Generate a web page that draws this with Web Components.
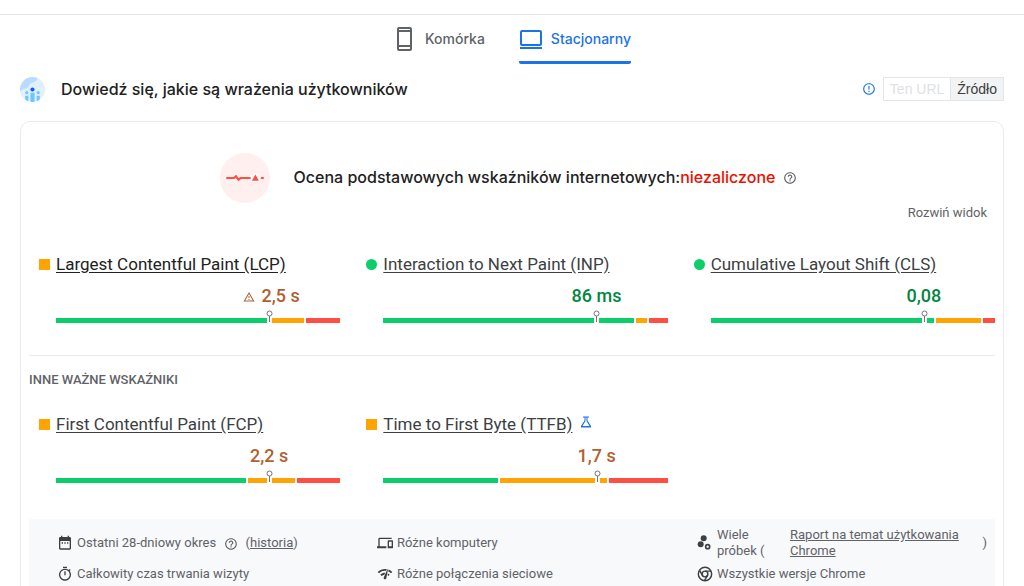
<!DOCTYPE html>
<html lang="pl">
<head>
<meta charset="utf-8">
<meta name="viewport" content="width=device-width, initial-scale=1">
<title>PageSpeed Insights</title>
<style>
html { scrollbar-width: none; }
body { margin: 0; background: #fff; color: #3c4043; font: 13px/16px Roboto, sans-serif; --display: "Inter", sans-serif; }
a { color: inherit; }
</style>
</head>
<body>
<psi-page>
  <psi-tabs slot="tabs">
    <psi-tab icon="phone">Komórka</psi-tab>
    <psi-tab icon="laptop" active>Stacjonarny</psi-tab>
  </psi-tabs>
  <section-header>Dowiedź się, jakie są wrażenia użytkowników
    <source-switch slot="end"></source-switch>
  </section-header>
  <vitals-card>
    <vitals-summary slot="summary" result="niezaliczone">Ocena podstawowych wskaźników internetowych:</vitals-summary>
    <metric-card slot="core" rating="average" value="2,5 s" warn strong bar="good:210 pin average:32 poor:34">Largest Contentful Paint (LCP)</metric-card>
    <metric-card slot="core" rating="good" value="86 ms" bar="good:210 pin good:34 average:11 poor:19">Interaction to Next Paint (INP)</metric-card>
    <metric-card slot="core" rating="good" value="0,08" bar="good:210 pin good:6 average:45 poor:12">Cumulative Layout Shift (CLS)</metric-card>
    <metric-card slot="other" rating="average" value="2,2 s" bar="good:188 average:19 pin average:23 poor:43">First Contentful Paint (FCP)</metric-card>
    <metric-card slot="other" rating="average" value="1,7 s" flask bar="good:113 average:94 pin average:7 poor:58">Time to First Byte (TTFB)</metric-card>
    <info-item slot="info" icon="calendar">Ostatni 28-dniowy okres <ui-icon name="help" style="--size:14px;margin:0 4px 0 5px"></ui-icon> (<a href="#historia">historia</a>)</info-item>
    <info-item slot="info" icon="devices">Różne komputery</info-item>
    <info-item slot="info" icon="samples" split>Wiele próbek (<a slot="link" href="#crux">Raport na temat użytkowania Chrome</a><span slot="close">)</span></info-item>
    <info-item slot="info" icon="timer">Całkowity czas trwania wizyty</info-item>
    <info-item slot="info" icon="network">Różne połączenia sieciowe</info-item>
    <info-item slot="info" icon="chrome">Wszystkie wersje Chrome</info-item>
  </vitals-card>
</psi-page>

<script>
const define = (name, html, setup) => {
  const template = document.createElement('template');
  template.innerHTML = html;
  customElements.define(name, class extends HTMLElement {
    constructor() {
      super();
      this.attachShadow({ mode: 'open' }).append(template.content.cloneNode(true));
    }
    connectedCallback() { if (setup) setup(this, this.shadowRoot); }
  });
};

const ICONS = {
  phone: '<path fill-rule="evenodd" d="M6 0h11q2 0 2 2v20q0 2-2 2H6q-2 0-2-2V2q0-2 2-2zm0 5v13h11V5zM6 2v1h11V2zM6 20v2h11v-2z"/>',
  laptop: '<rect x="2" y="4" width="20" height="14" rx="1" fill="none" stroke="currentColor" stroke-width="2"/><path d="M1 20h22v2H1z"/>',
  help: '<path d="M11 18h2v-2h-2v2zm1-16C6.48 2 2 6.48 2 12s4.48 10 10 10 10-4.48 10-10S17.52 2 12 2zm0 18c-4.41 0-8-3.59-8-8s3.59-8 8-8 8 3.59 8 8-3.59 8-8 8zm0-14c-2.21 0-4 1.79-4 4h2c0-1.1.9-2 2-2s2 .9 2 2c0 2-3 1.75-3 5h2c0-2.25 3-2.5 3-5 0-2.21-1.79-4-4-4z"/>',
  info: '<path d="M11 15h2v2h-2zm0-8h2v6h-2zm1-5C6.47 2 2 6.48 2 12s4.47 10 10 10 10-4.48 10-10S17.52 2 12 2zm0 18c-4.42 0-8-3.58-8-8s3.58-8 8-8 8 3.58 8 8-3.58 8-8 8z"/>',
  warning: '<path d="M12 6l7.53 13H4.47L12 6m0-4L1 21h22L12 2zm1 14h-2v2h2v-2zm0-6h-2v4h2v-4z"/>',
  flask: '<path d="M6 1h12v2h-3v6l7 11v3H2v-3L9 9V3H6zm5 2v7L5 20h14l-6-10V3z" fill-rule="evenodd"/>',
  calendar: '<path d="M19 3h-1V1h-2v2H8V1H6v2H5c-1.1 0-2 .9-2 2v15c0 1.1.9 2 2 2h14c1.1 0 2-.9 2-2V5c0-1.1-.9-2-2-2zm0 17H5V9h14v11zM7 11h2v2H7zm4 0h2v2h-2zm4 0h2v2h-2z"/>',
  timer: '<path d="M15 1H9v2h6V1zm-4 13h2V8h-2v6zm8.03-6.61l1.42-1.42c-.43-.51-.9-.99-1.41-1.41l-1.42 1.42C16.07 4.74 14.12 4 12 4c-4.97 0-9 4.03-9 9s4.02 9 9 9 9-4.03 9-9c0-2.12-.74-4.07-1.97-5.61zM12 20c-3.87 0-7-3.13-7-7s3.13-7 7-7 7 3.13 7 7-3.13 7-7 7z"/>',
  devices: '<path d="M4 6h18V4H4c-1.1 0-2 .9-2 2v11H0v3h14v-3H4V6zm19 2h-6c-.55 0-1 .45-1 1v10c0 .55.45 1 1 1h6c.55 0 1-.45 1-1V9c0-.55-.45-1-1-1zm-1 9h-4v-7h4v7z"/>',
  network: '<path d="M15.9 5c-.17 0-.32.09-.41.23l-.07.15-5.18 11.65c-.16.29-.26.61-.26.96 0 1.11.9 2.01 2.01 2.01.96 0 1.77-.68 1.96-1.59l.01-.03L16.4 5.5c0-.28-.22-.5-.5-.5zM1 9l2 2c2.88-2.88 6.79-4.08 10.53-3.62l1.19-2.68C9.89 3.84 4.74 5.27 1 9zm20 2l2-2c-1.64-1.64-3.55-2.82-5.59-3.57l-.53 2.82c1.5.62 2.9 1.53 4.12 2.75zm-4 4l2-2c-.8-.8-1.7-1.42-2.66-1.89l-.55 2.92c.42.27.83.59 1.21.97zM5 13l2 2c1.13-1.13 2.56-1.79 4.03-2l1.28-2.88c-2.63-.08-5.3.87-7.31 2.88z"/>',
  samples: '<circle cx="10" cy="5" r="4.5"/><circle cx="5.5" cy="14" r="4.5"/><circle cx="16" cy="17.5" r="3" fill="none" stroke="currentColor" stroke-width="2.5"/>',
  chrome: '<g fill="none" stroke="currentColor" stroke-width="2.2"><circle cx="12" cy="12" r="10"/><circle cx="12" cy="12" r="4.3"/><path d="M12 7.7h9M8.3 14.2L3.8 6.4M15.7 14.2l-4.5 7.8"/></g>',
  people: '<defs><clipPath id="disc"><circle cx="12" cy="12" r="12"/></clipPath></defs><g clip-path="url(#disc)"><path fill="#e1f0ff" d="M0 0h24v24H0z"/><path fill="#b8dbff" d="M0 0h17q0 4-4 5-3 0-4 3-1 3-4 3-2 0-5 3z"/><g fill="#6cc7ff"><path d="M5 18h3v6H5zM10 15h4v9h-4zM16 18h3v6h-3z"/><circle cx="6.5" cy="15" r="1.5"/><circle cx="17.5" cy="15" r="1.5"/></g><circle cx="12" cy="12" r="2" fill="#0d5bff"/></g>',
  pulse: '<circle cx="12" cy="12" r="12" fill="#ffefee"/><path d="M3 12h3.7l1-.8 1.2 1.6 1-.8h4.8M19.6 12H21" fill="none" stroke="#ff4e42"/><circle cx="17" cy="12" r="2.2" fill="#fff"/><path d="M17 10.3l1.7 3h-3.4z" fill="#ff4e42"/>'
};
define('ui-icon', `<style>
:host { display: inline-flex; flex: none; width: var(--size, 16px); height: var(--size, 16px); vertical-align: middle; }
svg { width: 100%; height: 100%; fill: currentColor; }
</style><svg viewBox="0 0 24 24" aria-hidden="true"></svg>`,
  (host, root) => { root.querySelector('svg').innerHTML = ICONS[host.getAttribute('name')] || ''; });

const setIcon = (icon, name) => {
  icon.setAttribute('name', name);
  icon.connectedCallback();
};

define('psi-page', `<style>
:host { display: block; padding-top: 14px; }
main { padding: 0 20px 20px; }
</style><slot name="tabs"></slot><main><slot></slot></main>`);

define('psi-tabs', `<style>
:host { display: block; border-top: 1px solid #e3e5ea; }
nav { display: flex; justify-content: center; gap: 34px; height: 49px; }
</style><nav role="tablist"><slot></slot></nav>`);

define('psi-tab', `<style>
:host { display: flex; --color: #5f6368; }
:host([active]) { --color: #1a73e8; }
button { all: unset; box-sizing: border-box; display: flex; align-items: center; gap: 8px; height: 49px; padding-top: 2px; color: var(--color); font: 500 14px/20px var(--display); cursor: pointer; border-bottom: 3px solid transparent; }
:host([active]) button { border-color: var(--color); border-radius: 2px; }
ui-icon { --size: 24px; }
</style><button role="tab"><ui-icon></ui-icon><slot></slot></button>`,
  (host, root) => {
    setIcon(root.querySelector('ui-icon'), host.getAttribute('icon'));
    root.querySelector('button').setAttribute('aria-selected', host.hasAttribute('active'));
  });

define('section-header', `<style>
:host { display: flex; align-items: center; height: 24px; margin: 13px 0 20px; color: #212121; }
ui-icon { --size: 25px; margin-right: 16px; }
h2 { flex: 1; margin: 0; font: 500 16px/24px var(--display); }
</style><ui-icon name="people"></ui-icon><h2><slot></slot></h2><slot name="end"></slot>`);

define('source-switch', `<style>
:host { display: flex; align-items: center; }
ui-icon { --size: 14px; color: #1a73e8; margin-right: 7px; }
button { box-sizing: border-box; height: 24px; padding: 0 6px; border: 1px solid #e3e5e8; background: #f1f3f4; color: #3c4043; font: 14px/16px "Liberation Sans", Arial, sans-serif; }
button:disabled { background: #fff; color: #dfe1e5; border-right: 0; }
</style><ui-icon name="info"></ui-icon><button disabled>Ten URL</button><button>Źródło</button>`);

define('vitals-card', `<style>
:host { display: block; border: 1px solid #ebebeb; border-radius: 10px; padding: 30px 8px 20px; }
.expand { display: flex; justify-content: flex-end; padding-right: 8px; }
.expand button { all: unset; color: #5f6368; font: 13px/16px Roboto, sans-serif; cursor: pointer; }
.grid { display: grid; grid-template-columns: repeat(3, 1fr); gap: 16px; }
.core { margin-top: 31px; padding-bottom: 32px; border-bottom: 1px solid #e8eaed; }
h3 { margin: 16px 0 24px; color: #5f6368; font: 500 13px/16px Roboto, sans-serif; text-transform: uppercase; }
.info { display: grid; grid-template-columns: repeat(3, 1fr); gap: 7px 30px; margin-top: 36px; padding: 8px 8px 20px 28px; background: #f8f9fb; border-radius: 2px; }
</style>
<slot name="summary"></slot>
<div class="expand"><button>Rozwiń widok</button></div>
<div class="grid core"><slot name="core"></slot></div>
<h3>Inne ważne wskaźniki</h3>
<div class="grid"><slot name="other"></slot></div>
<div class="info"><slot name="info"></slot></div>`);

define('vitals-summary', `<style>
:host { display: flex; align-items: center; justify-content: center; height: 51px; margin-bottom: 2px; padding-right: 7px; color: #212121; }
h2 { margin: 0 8px 0 24px; padding-bottom: 2px; font: 500 16px/24px var(--display); }
span { color: #eb0f00; }
.pulse { --size: 50px; }
.help { --size: 14px; color: #5f6368; }
</style><ui-icon class="pulse" name="pulse"></ui-icon><h2><slot></slot><span></span></h2><ui-icon class="help" name="help"></ui-icon>`,
  (host, root) => { root.querySelector('span').textContent = host.getAttribute('result'); });

define('metric-bar', `<style>
:host { display: flex; align-items: flex-end; gap: 2px; height: 13px; }
i { flex: 1 1 0; height: 5px; }
.good { background: #0cce6b; }
.average { background: #ffa400; }
.poor { background: #ff4e42; }
svg { flex: none; width: 7px; height: 12px; margin: 0 -3px 1px; fill: #fff; stroke: #757575; }
</style>`,
  (host, root) => {
    for (const part of host.getAttribute('parts').split(' ')) {
      if (part === 'pin') {
        root.innerHTML += '<svg viewBox="0 0 7 12"><path d="M3.5 6v6"/><circle cx="3.5" cy="3.5" r="2.5"/></svg>';
        continue;
      }
      const [kind, size] = part.split(':');
      root.innerHTML += `<i class="${kind}" style="flex-grow:${size}"></i>`;
    }
  });

define('metric-card', `<style>
:host { display: block; padding-left: 10px; --text: #3c4043; --value: #b1602f; }
:host([strong]) { --text: #212121; }
:host([rating="good"]) { --value: #018642; }
header { display: flex; align-items: center; height: 24px; }
.dot { width: 11px; height: 11px; margin-right: 6px; background: #ffa400; }
:host([rating="good"]) .dot { border-radius: 50%; background: #0cce6b; }
a { color: var(--text); font: 17px/24px Roboto, sans-serif; text-underline-offset: 2px; }
.flask { --size: 12px; margin: 0 0 4px 8px; color: #1a73e8; }
.body { margin-left: 17px; }
.value { box-sizing: border-box; display: flex; align-items: center; justify-content: center; width: 50%; height: 24px; margin: 8px 0 2px 50%; color: var(--value); font: 500 18px/24px Roboto, sans-serif; }
:host([warn]) .value { padding-left: 4px; }
.warn { --size: 12px; margin: 2px 7px 0 0; }
:host(:not([flask])) .flask, :host(:not([warn])) .warn { display: none; }
</style>
<header><span class="dot"></span><a href="#metric"><slot></slot></a><ui-icon class="flask" name="flask"></ui-icon></header>
<div class="body"><div class="value"><ui-icon class="warn" name="warning"></ui-icon><span></span></div></div>`,
  (host, root) => {
    root.querySelector('.value span').textContent = host.getAttribute('value');
    const bar = document.createElement('metric-bar');
    bar.setAttribute('parts', host.getAttribute('bar'));
    root.querySelector('.body').append(bar);
  });

define('info-item', `<style>
:host { display: flex; align-items: center; color: #5f6368; font: 13px/16px Roboto, sans-serif; }
.icon { color: #3c4043; margin-right: 4px; }
:host([split]) .text { width: 49px; flex: none; margin-right: 24px; }
::slotted([slot="link"]) { flex: 1; margin-right: 16px; }
</style><ui-icon class="icon"></ui-icon><span class="text"><slot></slot></span><slot name="link"></slot><slot name="close"></slot>`,
  (host, root) => { setIcon(root.querySelector('.icon'), host.getAttribute('icon')); });
</script>
</body>
</html>
